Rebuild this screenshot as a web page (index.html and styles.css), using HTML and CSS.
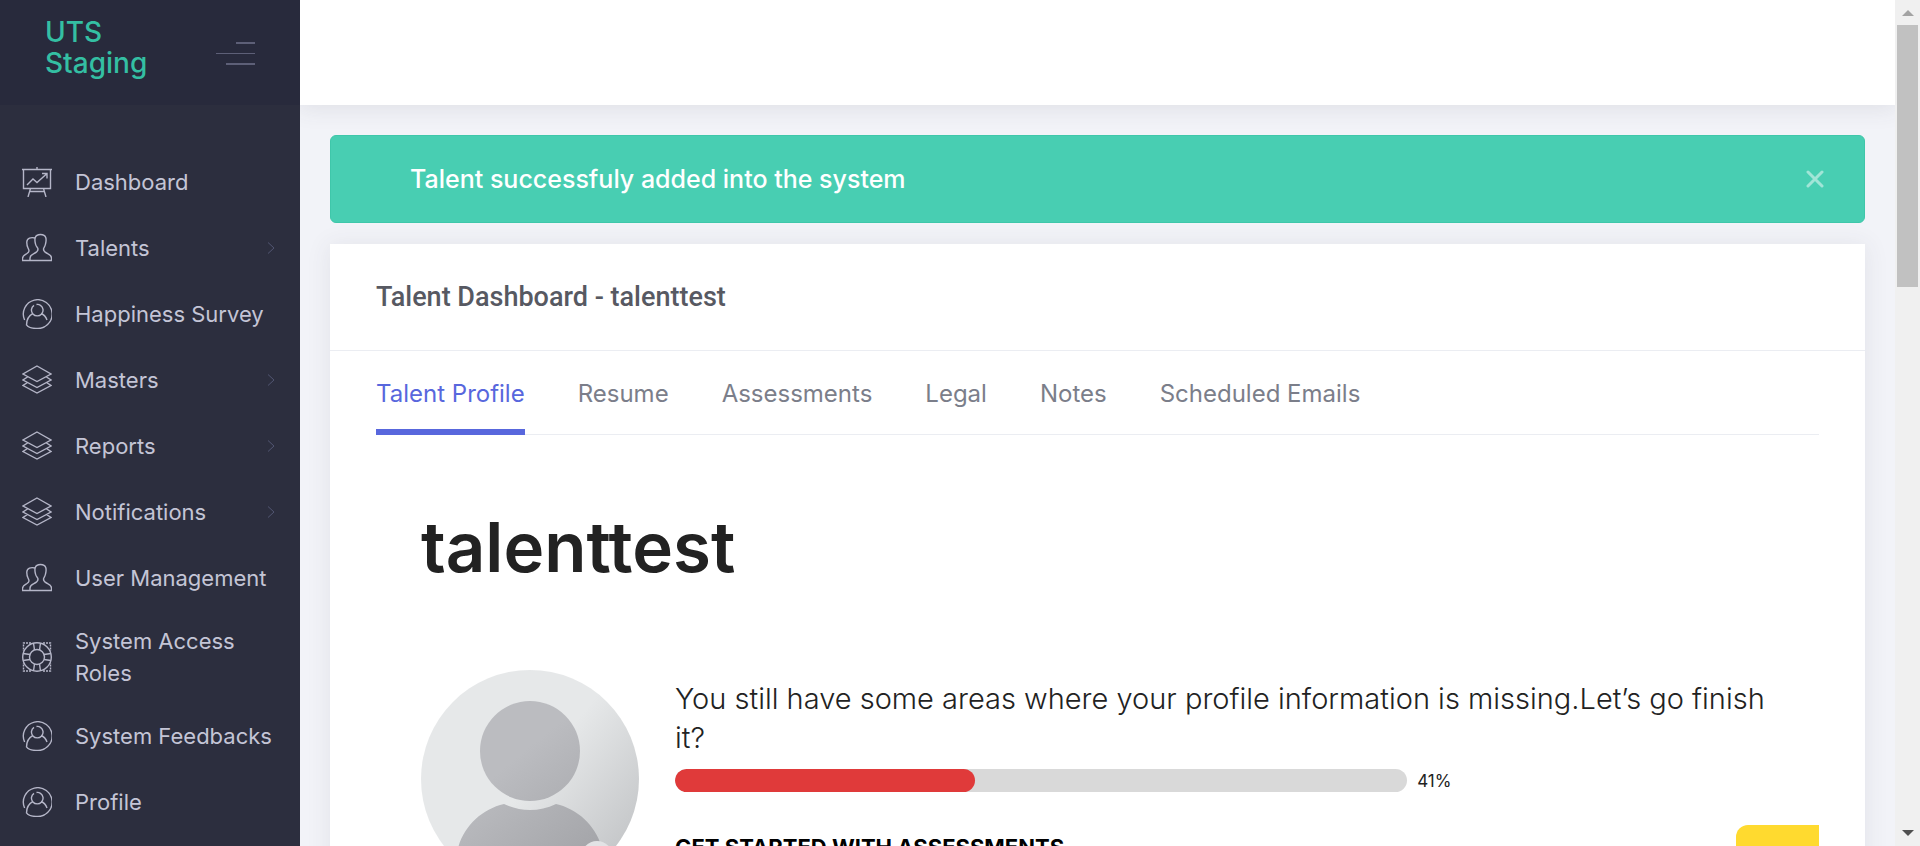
FILE: index.html
```html
<!DOCTYPE html>
<html lang="en">
<head>
<meta charset="utf-8">
<meta name="viewport" content="width=device-width, initial-scale=1">
<title>Talent Dashboard</title>
<link rel="stylesheet" href="styles.css">
</head>
<body>
<svg class="sprite" aria-hidden="true">
  <symbol id="i-board" viewBox="0 0 30 30"><path d="M0 2.500h30M1.500 2.500v19h27v-19M15 0v2.500M5 18l6-6 4 3.500L24.500 7M20 6.500h5v5M8.500 21.500 6 30M21.500 21.500 24 30M8 24.500h14"/></symbol>
  <symbol id="i-users" viewBox="0 0 30 30"><path d="M8 27.500V25c0-3 2-3.500 5-5 2-1 3-1.500 3-4 0-1.500-2-2-2.500-5C12.500 7 12 1.500 18.500 1.500s6 5.500 5 9.500c-.5 3-2 3.500-2 5 0 2.500 1 3 3 4 3 1.500 5 2 5 5v2.500zM13 5C9 4 5 5 4.800 9c-.1 3 .2 4 1.200 6 .5 1 1 1.500 1 3s-1 2-3 3.200C1.500 22.500.5 23 .5 25.500v2H8"/></symbol>
  <symbol id="i-user" viewBox="0 0 30 30"><path d="M2.600 21A14.400 14.400 0 1 1 14 29.400c-4 0-8-1.500-9.500-3.500 0-5 2-9 6.500-11.500M19 14.500c3 1 5 3.500 6 6.500M12 6.300a5.800 5.800 0 1 0 6.500 0M14.500 5.500c1.500-.3 3 .2 4 .8"/></symbol>
  <symbol id="i-layers" viewBox="0 0 30 30"><path d="M15 1 29 9 15 16.500 1 9zM5.500 12 1 15l14 7.500L29 15l-4.500-3M5.500 17.500 1 20.500 15 28l14-7.500-4.500-3"/></symbol>
  <symbol id="i-ring" viewBox="0 0 30 30"><circle cx="15" cy="15" r="14.300"/><circle cx="15" cy="15" r="7.500"/><path d="M11.500 1l1 7M18.500 1l-1 7M12.500 22l-1 7M17.500 22l1 7M1 11.500l7 1M1 18.500l7-1M22 12.500l7-1M22 17.500l7 1"/><path stroke-dasharray="2 1" d="M9 1H1.500v8M21 1h7.500v8M9 29H1.500v-8M21 29h7.500v-8"/></symbol>
  <symbol id="i-chev" viewBox="0 0 8 12"><path d="m1 .5 6 5.500-6 5.500"/></symbol>
</svg>
<div class="app">
  <aside class="sidebar">
    <div class="brand">
      <a class="brand-name" href="#">UTS Staging</a>
      <button class="toggle" type="button" aria-label="Toggle menu"><span class="bar bar-short"></span><span class="bar bar-long"></span><span class="bar bar-mid"></span></button>
    </div>
    <nav class="menu">
      <a class="item" href="#"><svg class="icon"><use href="#i-board"/></svg><span class="label">Dashboard</span></a>
      <a class="item" href="#"><svg class="icon"><use href="#i-users"/></svg><span class="label">Talents</span><svg class="chev"><use href="#i-chev"/></svg></a>
      <a class="item" href="#"><svg class="icon"><use href="#i-user"/></svg><span class="label">Happiness Survey</span></a>
      <a class="item" href="#"><svg class="icon"><use href="#i-layers"/></svg><span class="label">Masters</span><svg class="chev"><use href="#i-chev"/></svg></a>
      <a class="item" href="#"><svg class="icon"><use href="#i-layers"/></svg><span class="label">Reports</span><svg class="chev"><use href="#i-chev"/></svg></a>
      <a class="item" href="#"><svg class="icon"><use href="#i-layers"/></svg><span class="label">Notifications</span><svg class="chev"><use href="#i-chev"/></svg></a>
      <a class="item" href="#"><svg class="icon"><use href="#i-users"/></svg><span class="label">User Management</span></a>
      <a class="item" href="#"><svg class="icon"><use href="#i-ring"/></svg><span class="label">System Access<br>Roles</span></a>
      <a class="item" href="#"><svg class="icon"><use href="#i-user"/></svg><span class="label">System Feedbacks</span></a>
      <a class="item" href="#"><svg class="icon"><use href="#i-user"/></svg><span class="label">Profile</span></a>
    </nav>
  </aside>
  <div class="page">
    <header class="topbar"></header>
    <main class="content">
      <div class="alert" role="alert">
        <span>Talent successfuly added into the system</span>
        <button class="close" type="button" aria-label="Close"><svg viewBox="0 0 18 18"><path d="m2 2 14 14M16 2 2 16"/></svg></button>
      </div>
      <section class="card">
        <div class="card-head"><h1 class="card-title">Talent Dashboard - talenttest</h1></div>
        <div class="card-body">
          <nav class="tabs">
            <a class="tab active" href="#">Talent Profile</a>
            <a class="tab" href="#">Resume</a>
            <a class="tab" href="#">Assessments</a>
            <a class="tab" href="#">Legal</a>
            <a class="tab" href="#">Notes</a>
            <a class="tab" href="#">Scheduled Emails</a>
          </nav>
          <div class="profile">
            <h2 class="name">talenttest</h2>
            <div class="summary">
              <svg class="avatar" viewBox="0 0 218 218" role="img" aria-label="Profile picture">
                <defs>
                  <linearGradient id="bg" x1="0" y1="0.100" x2="1" y2="0.900"><stop offset="0.500" stop-color="#e6e8e9"/><stop offset="0.900" stop-color="#c6c8ca"/></linearGradient>
                  <linearGradient id="fg" gradientUnits="userSpaceOnUse" x1="80" y1="100" x2="170" y2="210"><stop offset="0" stop-color="#bbbcc0"/><stop offset="1" stop-color="#a0a1a5"/></linearGradient>
                  <clipPath id="round"><circle cx="109" cy="109" r="109"/></clipPath>
                </defs>
                <g clip-path="url(#round)">
                  <rect width="218" height="218" fill="url(#bg)"/>
                  <circle cx="109" cy="81" r="50" fill="url(#fg)"/>
                  <path fill="url(#fg)" d="M35 190c2-28 22-50 48-56 17 8 35 8 52 0 26 6 46 28 48 56v28H35z"/>
                </g>
                <circle cx="176" cy="187" r="16" fill="#e2e3e5"/>
              </svg>
              <div class="details">
                <p class="message">You still have some areas where your profile information is missing.Let’s go finish it?</p>
                <div class="progress-row">
                  <div class="track" role="progressbar" aria-valuenow="41" aria-valuemin="0" aria-valuemax="100" aria-label="Profile completion"><div class="fill" style="width:41%"></div></div>
                  <span class="percent">41%</span>
                </div>
                <div class="next">
                  <h3 class="next-title">GET STARTED WITH ASSESSMENTS</h3>
                  <div class="callout"></div>
                </div>
              </div>
            </div>
          </div>
        </div>
      </section>
    </main>
  </div>
  <div class="scrollbar" aria-hidden="true">
    <svg class="arrow" viewBox="0 0 24 25"><path fill="#a3a3a3" d="m6 16 6-6 6 6z"/></svg>
    <div class="thumb"></div>
    <svg class="arrow arrow-down" viewBox="0 0 24 25"><path fill="#505050" d="m6 9 6 6 6-6z"/></svg>
  </div>
</div>
</body>
</html>
```
FILE: styles.css
```css
* { box-sizing: border-box; }
body { margin: 0; background: #f2f3f8; font-family: Inter, "Liberation Sans", sans-serif; }
h1, h2, h3, p { margin: 0; }
a { color: inherit; text-decoration: none; }
button { padding: 0; border: 0; background: none; cursor: pointer; }
.sprite { display: none; }
.app { display: flex; height: 100vh; overflow: hidden; }

.sidebar { flex: 0 0 300px; background: #2c2e3e; }
.brand { display: flex; align-items: center; justify-content: space-between; height: 105px; padding: 0 45px 10px; background: #282a3c; }
.brand-name { width: 120px; color: #34bfa3; font-size: 28px; font-weight: 500; line-height: 31px; }
.toggle { display: flex; flex-direction: column; align-items: flex-end; gap: 9px; margin-top: 12px; }
.bar { height: 2px; background: #5d5f77; }
.bar-short { width: 19px; }
.bar-long { width: 39px; height: 1px; }
.bar-mid { width: 29px; }
.menu { padding-top: 44px; }
.item { display: flex; align-items: center; min-height: 66px; padding: 14px 25px 14px 22px; color: #c4c5d6; font-size: 22px; line-height: 32px; white-space: nowrap; }
.icon { flex: none; width: 30px; height: 30px; margin-right: 23px; fill: none; stroke: #b5b6c8; stroke-width: 1.4; }
.label { flex: 1; }
.chev { width: 8px; height: 12px; fill: none; stroke: #525672; stroke-width: 1; }

.page { flex: 1; min-width: 0; overflow: hidden; }
.topbar { height: 105px; background: #fff; box-shadow: 0 2px 22px 2px rgba(69, 65, 78, 0.1); }
.content { padding: 30px; }
.alert { display: flex; align-items: center; justify-content: space-between; height: 88px; margin-bottom: 21px; padding: 0 40px 0 79px; border: 1px solid #3fc7aa; border-radius: 6px; background: #48ceb2; color: #fff; font-size: 25px; font-weight: 500; }
.close { width: 18px; height: 18px; }
.close svg { display: block; fill: none; stroke: #a1e5d7; stroke-width: 3; stroke-linecap: round; }
.card { background: #fff; box-shadow: 0 2px 22px 2px rgba(69, 65, 78, 0.08); }
.card-head { display: flex; align-items: center; height: 107px; padding: 0 46px; border-bottom: 1px solid #ebedf2; }
.card-title { color: #575962; font-family: Roboto, sans-serif; font-size: 27px; font-weight: 500; line-height: 32px; }
.card-body { padding: 0 46px; }
.tabs { display: flex; gap: 53px; border-bottom: 1px solid #ebedf2; }
.tab { height: 84px; margin-bottom: -1px; padding-top: 27px; border-bottom: 6px solid transparent; color: #7b7e8a; font-size: 24px; line-height: 32px; }
.tab.active { border-color: #5867dd; color: #5867dd; }
.profile { padding: 72px 0 0 45px; }
.name { color: #222; font-size: 69px; font-weight: 600; line-height: 80px; }
.summary { display: flex; gap: 36px; padding-top: 83px; }
.avatar { flex: none; width: 218px; height: 218px; }
.details { flex: 1; min-width: 0; padding-top: 9px; }
.message { padding-right: 40px; color: #222; font-size: 29px; font-weight: 300; line-height: 39px; }
.progress-row { display: flex; align-items: center; gap: 10px; margin-top: 12px; }
.track { flex: 0 0 64%; height: 23px; overflow: hidden; border-radius: 12px; background: #d9d9d9; }
.fill { height: 100%; border-radius: 12px; background: #e03a3a; }
.percent { color: #222; font-size: 17px; line-height: 20px; }
.next { display: flex; align-items: flex-start; justify-content: space-between; padding-top: 33px; }
.next-title { padding-top: 10px; color: #000; font-size: 22px; font-weight: 700; line-height: 24px; }
.callout { width: 83px; height: 120px; border-radius: 12px 0 0 12px; background: #ffda2f; }

.scrollbar { display: flex; flex: 0 0 25px; flex-direction: column; align-items: center; background: #f0f0f0; }
.arrow { flex: none; width: 24px; height: 25px; }
.thumb { width: 21px; height: 31%; background: #c1c1c1; }
.arrow-down { margin-top: auto; }
```
